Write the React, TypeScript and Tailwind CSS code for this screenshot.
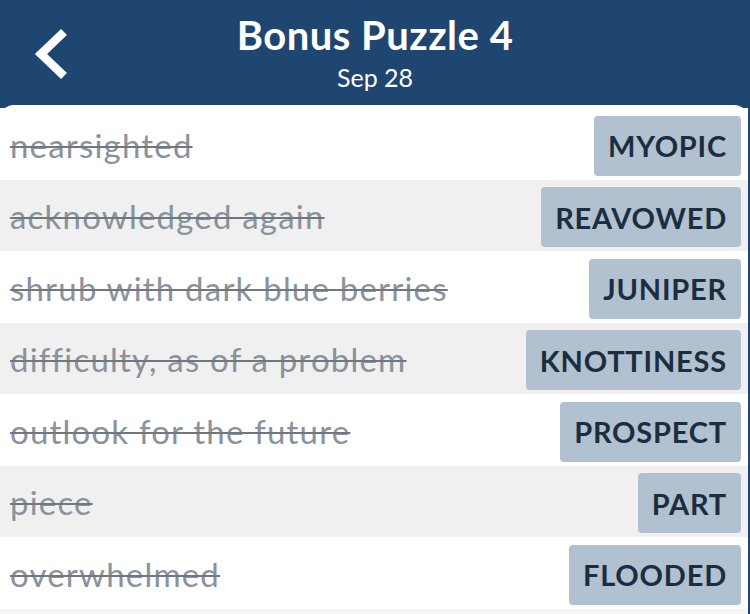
import React from "react";

const rows = [
  { clue: "nearsighted", answer: "MYOPIC" },
  { clue: "acknowledged again", answer: "REAVOWED" },
  { clue: "shrub with dark blue berries", answer: "JUNIPER" },
  { clue: "difficulty, as of a problem", answer: "KNOTTINESS" },
  { clue: "outlook for the future", answer: "PROSPECT" },
  { clue: "piece", answer: "PART" },
  { clue: "overwhelmed", answer: "FLOODED" },
];

export default function App() {
  return (
    <div
      className="w-[750px] h-[614px] bg-[#1f4571] overflow-hidden"
      style={{ fontFamily: "Lato, 'Open Sans', sans-serif" }}
    >
      <div className="relative h-[105px] flex flex-col items-center">
        <svg
          className="absolute left-[30px] top-[24px]"
          width="44"
          height="60"
          viewBox="0 0 44 60"
        >
          <polyline
            points="34,8 11,30 34,52"
            fill="none"
            stroke="white"
            strokeWidth="8.5"
            strokeLinecap="butt"
            strokeLinejoin="miter"
          />
        </svg>
        <div className="mt-[11px] text-[40px] leading-[48px] tracking-[0.5px] font-bold text-white">
          Bonus Puzzle 4
        </div>
        <div className="mt-[3px] text-[25px] leading-[30px] text-white">Sep 28</div>
      </div>
      <div className="bg-white rounded-t-[14px] mr-[2px] pt-[3px] h-[509px]">
        {rows.map((r, i) => (
          <div
            key={i}
            className={`h-[71.5px] flex items-center justify-between pl-[10px] pr-[6px] ${
              i % 2 === 1 ? "bg-[#f0f0f0]" : "bg-white"
            }`}
          >
            <span className="mt-[3px] text-[33px] tracking-[1.2px] text-[#8a929b] line-through decoration-[2px] decoration-[#6f7780]">
              {r.clue}
            </span>
            <span className="h-[60px] mt-[4px] mr-[1px] px-[14px] rounded-[4px] bg-[#b1c1cf] flex items-center text-[29px] tracking-[0.8px] font-bold text-[#1b2d3f]">
              {r.answer}
            </span>
          </div>
        ))}
        <div className="h-[10px] bg-[#f5f5f3]" />
      </div>
    </div>
  );
}
